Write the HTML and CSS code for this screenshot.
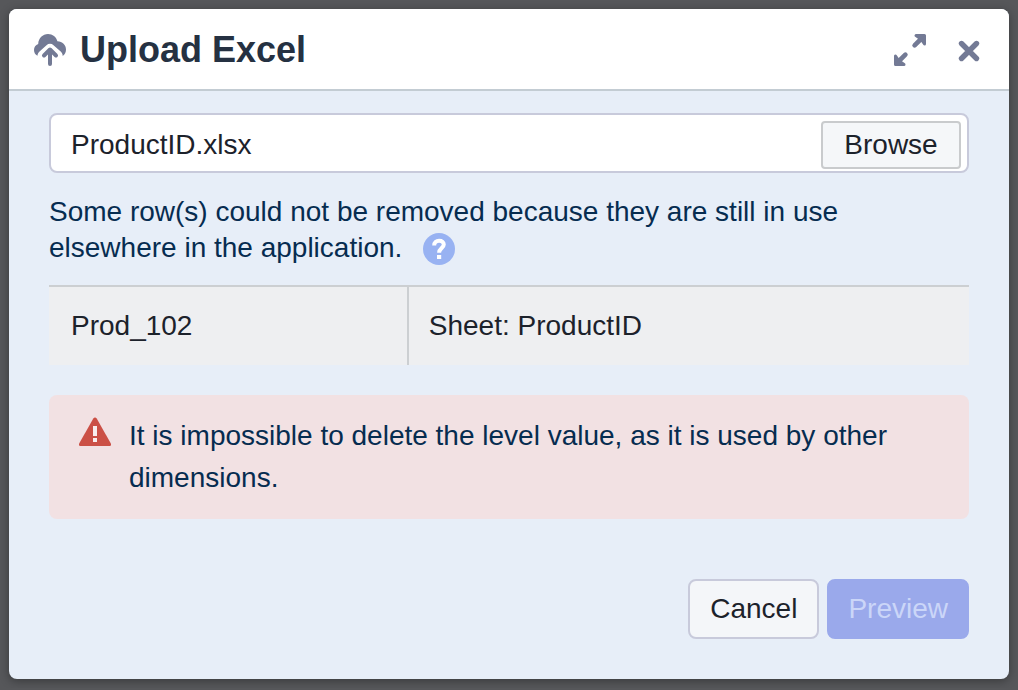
FILE: index.html
```html
<!DOCTYPE html>
<html lang="en">
<head>
    <meta charset="UTF-8">
    <meta name="viewport" content="width=device-width, initial-scale=1.0">
    <title>Upload Excel</title>
    <link rel="stylesheet" href="styles.css">
</head>
<body>
    <div class="modal" role="dialog" aria-labelledby="modalTitle">
        <header class="modal-header">
            <svg class="icon" viewBox="0 0 32 32" aria-hidden="true">
                <path fill="currentColor" d="M3.500 21.800C1.200 20.600 0 18.600 0 16C0 13 1.600 10.800 4.200 9.900C4.500 4.200 8.700 0 14 0C18.600 0 22.300 3 23.400 7.300C28.400 7.300 32 11 32 15.600C32 18.300 30.900 20.600 28.700 22C28.600 20.200 28 18.800 26.700 17.600L19.500 11.200C17.500 9.400 14.500 9.400 12.500 11.200L5.800 17.200C4.400 18.500 3.500 20 3.500 21.800Z"/>
                <path fill="none" stroke="currentColor" stroke-width="4" stroke-linecap="round" stroke-linejoin="round" d="M10 21.500L16 15.500L22 21.500M16 16.500V30"/>
            </svg>
            <h1 id="modalTitle">Upload Excel</h1>
            <button type="button" class="icon-btn" aria-label="Expand">
                <svg class="icon" viewBox="0 0 32 32" aria-hidden="true">
                    <path fill="none" stroke="currentColor" stroke-width="4.600" stroke-linecap="round" d="M20.600 11.400L28 4M11.400 20.600L4 28"/>
                    <path fill="currentColor" stroke="currentColor" stroke-width="3" stroke-linecap="round" stroke-linejoin="round" d="M22 1.500H30.500V10L27 5ZM1.500 22V30.500H10L5 27Z"/>
                </svg>
            </button>
            <button type="button" class="icon-btn" aria-label="Close">
                <svg class="icon" viewBox="0 0 32 32" aria-hidden="true">
                    <path fill="none" stroke="currentColor" stroke-width="5.400" stroke-linecap="round" d="M8.500 9.500L23.500 24.500M23.500 9.500L8.500 24.500"/>
                </svg>
            </button>
        </header>

        <form class="modal-body">
            <div class="file-field">
                <input type="text" class="file-name" value="ProductID.xlsx" aria-label="Excel file" readonly>
                <button type="button" class="browse-btn">Browse</button>
            </div>

            <p class="message">
                Some row(s) could not be removed because they are still in use elsewhere in the application.
                <button type="button" class="help-btn" aria-label="Help">
                    <svg class="icon" viewBox="0 0 32 32" aria-hidden="true">
                        <path fill="none" stroke="currentColor" stroke-width="4" d="M11.200 12.500C11.200 9.600 13.200 7.800 16.100 7.800C18.900 7.800 20.800 9.300 20.800 11.600C20.800 15 16.100 15.200 16.100 19.800"/>
                        <path fill="currentColor" d="M14 22H18.200V26H14Z"/>
                    </svg>
                </button>
            </p>

            <table class="rows-table">
                <tbody>
                    <tr>
                        <td class="row-name">Prod_102</td>
                        <td>Sheet: ProductID</td>
                    </tr>
                </tbody>
            </table>

            <div class="alert" role="alert">
                <svg class="icon alert-icon" viewBox="0 0 32 32" aria-hidden="true">
                    <path fill="currentColor" d="M14.300 3.400C15.100 2.200 16.900 2.200 17.700 3.400L31.700 28.300C32.400 29.600 31.900 31 30.500 31H1.500C0.100 31 -0.400 29.600 0.300 28.300Z"/>
                    <path fill="#f8eeee" d="M14 11H18V21H14ZM14 23H18V27H14Z"/>
                </svg>
                <p>It is impossible to delete the level value, as it is used by other dimensions.</p>
            </div>

            <div class="actions">
                <button type="button" class="btn">Cancel</button>
                <button type="submit" class="btn btn-primary" disabled>Preview</button>
            </div>
        </form>
    </div>
</body>
</html>
```
FILE: styles.css
```css
* {
    box-sizing: border-box;
}
body {
    margin: 0;
    padding: 9px;
    background-color: #56575a;
    font-family: "Liberation Sans", Arial, sans-serif;
    font-size: 28px;
    color: #1c222b;
}
button, input {
    font: inherit;
    color: inherit;
}
button {
    cursor: pointer;
}

/* Modal */
.modal {
    background: #e7eef8;
    border-radius: 8px;
    overflow: hidden;
    box-shadow: 0 2px 10px rgba(0,0,0,0.35);
}
.modal-header {
    display: flex;
    align-items: center;
    height: 82px;
    padding: 2px 24px 0 25px;
    background: #fff;
    border-bottom: 2px solid #c3ccd3;
    color: #737a95;
}
.modal-header h1 {
    flex: 1;
    margin: 0 0 0 14px;
    font-size: 36px;
    line-height: 40px;
    color: #253142;
}
.icon {
    display: block;
    flex: none;
    width: 32px;
    height: 32px;
}
.icon-btn {
    margin-left: 27px;
    padding: 0;
    border: none;
    background: none;
    color: inherit;
}
.modal-body {
    padding: 22px 40px 40px;
}

/* File field */
.file-field {
    display: flex;
    height: 60px;
    padding: 6px 6px 2px;
    background: #fff;
    border: 2px solid #c8cadb;
    border-radius: 8px;
}
.file-name {
    flex: 1;
    min-width: 0;
    padding: 0 14px;
    border: none;
    outline: none;
    background: none;
}
.browse-btn {
    width: 140px;
    padding: 0;
    background: #f5f7f9;
    border: 2px solid #c9cbcd;
    border-radius: 4px;
}

/* Message */
.message {
    margin: 21px 0 19px;
    line-height: 36px;
    color: #062c50;
}
.help-btn {
    width: 32px;
    height: 32px;
    margin-left: 13px;
    padding: 0;
    border: none;
    border-radius: 50%;
    background: #98b2f2;
    color: #fff;
    vertical-align: -8px;
}

/* Rows */
.rows-table {
    width: 100%;
    border-collapse: collapse;
    table-layout: fixed;
    background: #eeeff1;
}
.rows-table td {
    height: 79px;
    padding: 0 20px;
    border-top: 2px solid #cccfd2;
}
.rows-table .row-name {
    width: 39%;
    padding-left: 22px;
    border-right: 2px solid #cccfd2;
}

/* Alert */
.alert {
    display: flex;
    gap: 18px;
    margin: 30px 0 60px;
    padding: 20px 30px;
    background: #f2e1e3;
    border-radius: 8px;
    line-height: 42px;
    color: #062c50;
}
.alert p {
    margin: 0;
}
.alert-icon {
    color: #cb5046;
}

/* Buttons */
.actions {
    display: flex;
    justify-content: flex-end;
    gap: 8px;
}
.btn {
    height: 60px;
    padding: 0 20px;
    background: #f4f6f9;
    border: 2px solid #c8cadb;
    border-radius: 8px;
}
.btn-primary {
    padding: 0 19px;
    background: #9aa9eb;
    border-color: #9aa9eb;
    color: #cbd6f8;
}
.btn-primary:disabled {
    cursor: default;
}
```
